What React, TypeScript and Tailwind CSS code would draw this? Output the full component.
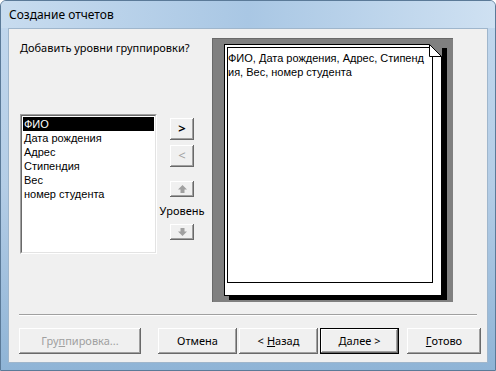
import React from 'react';

// 🔹 Мастер отчетов: шаг группировки (классический диалог Access)
const fields = ['ФИО', 'Дата рождения', 'Адрес', 'Стипендия', 'Вес', 'номер студента'];

const btn3d =
  'bg-[#f0f0f0] shadow-[inset_-1px_-1px_#696969,inset_1px_1px_#ffffff,inset_-2px_-2px_#a0a0a0] flex items-center justify-center';

function ArrowIcon({ down }: { down?: boolean }) {
  return (
    <svg width="9" height="8" viewBox="0 0 9 8" className={down ? 'rotate-180' : ''}>
      <path d="M4.5 0 L9 4.5 L6.5 4.5 L6.5 8 L2.5 8 L2.5 4.5 L0 4.5 Z" fill="#a0a0a0" />
    </svg>
  );
}

export default function App() {
  return (
    <div
      className="w-[496px] h-[371px] flex flex-col bg-gradient-to-b from-[#c2d8ee] via-[#b4cde6] to-[#8fb4d6] border border-[#5b7a98] rounded-t-[6px] overflow-hidden"
      style={{ fontFamily: '"Noto Sans", "Open Sans", sans-serif' }}
    >
      {/* заголовок окна */}
      <div className="h-[27px] flex items-center pl-[8px] text-[12px] text-black bg-gradient-to-r from-[#c8dcef] via-[#a9c7e4] to-[#cfe1f2]">
        Создание отчетов
      </div>

      {/* тело диалога */}
      <div className="flex-1 mx-[7px] mb-[7px] bg-[#f0f0f0] border border-[#9fb6cc] flex flex-col">
        <div className="flex pl-[11px] pt-[9px]">
          {/* левая часть */}
          <div className="w-[192px] flex flex-col">
            <div className="mt-[2px] text-[11px] leading-[16px] text-black">Добавить уровни группировки?</div>

            <div className="mt-[58px] flex">
              {/* список полей */}
              <div className="w-[137px] h-[140px] border border-t-[#a0a0a0] border-l-[#a0a0a0] border-b-white border-r-white">
                <div
                  className="w-full h-full bg-white border border-t-[#696969] border-l-[#696969] border-b-[#e3e3e3] border-r-[#e3e3e3] pt-px px-px text-[11px] leading-[14px] text-black"
                  style={{ fontFamily: '"Liberation Sans", Arial, sans-serif' }}
                >
                  {fields.map((f, i) => (
                    <div key={f} className={`pl-[1px] h-[14px] ${i === 0 ? 'bg-black text-white' : ''}`}>
                      {f}
                    </div>
                  ))}
                </div>
              </div>

              {/* кнопки перемещения */}
              <div className="w-[44px] ml-[3px] pt-[4px] flex flex-col items-center">
                <div className={`${btn3d} w-[24px] h-[22px] text-[13px] font-bold text-black`}>&gt;</div>
                <div className={`${btn3d} w-[24px] h-[22px] mt-[5px] text-[13px] text-[#a0a0a0]`}>&lt;</div>
                <div className={`${btn3d} w-[24px] h-[16px] mt-[14px]`}>
                  <ArrowIcon />
                </div>
                <div className="mt-[6px] text-[11px] leading-[16px] text-black">Уровень</div>
                <div className={`${btn3d} w-[24px] h-[16px] mt-[5px]`}>
                  <ArrowIcon down />
                </div>
              </div>
            </div>
          </div>

          {/* предпросмотр */}
          <div className="w-[241px] h-[264px] bg-[#808080] border-l border-t border-[#6a6a6a] pl-[11px] pt-[5px]">
            <div className="relative w-[218px] h-[252px] bg-white border border-black shadow-[5px_4px_0_#000] p-[2px] pb-[12px] pr-[8px]">
              <div
                className="w-full h-full border border-black pt-[3px] text-[11px] leading-[14px] text-black whitespace-nowrap"
                style={{ fontFamily: '"Liberation Sans", Arial, sans-serif' }}
              >
                <div>ФИО, Дата рождения, Адрес, Стипенд</div>
                <div>ия, Вес, номер студента</div>
              </div>
              {/* загнутый уголок */}
              <svg width="13" height="13" viewBox="0 0 13 13" className="absolute -top-px -right-px">
                <path d="M0 0 L13 0 L13 13 Z" fill="#808080" />
                <path d="M0.5 0.5 L12.5 12.5 L0.5 12.5 Z" fill="#ffffff" />
                <path d="M0.5 0.5 L12.5 12.5" stroke="#000" strokeWidth="1" />
                <path d="M0.5 0.5 L0.5 12.5 L12.5 12.5" stroke="#000" strokeWidth="1" fill="none" />
              </svg>
            </div>
          </div>
        </div>

        {/* разделитель */}
        <div className="mx-[10px] mt-[12px] h-[2px] border-t border-[#a0a0a0] border-b border-b-white" />

        {/* кнопки внизу */}
        <div className="flex mt-[12px] pl-[10px] text-[11px]">
          <div className={`${btn3d} w-[122px] h-[26px] text-[#a0a0a0]`}>
            Гру<span className="underline">п</span>пировка...
          </div>
          <div className={`${btn3d} w-[79px] h-[26px] ml-[17px] text-black`}>Отмена</div>
          <div className={`${btn3d} w-[79px] h-[26px] ml-[2px] text-black`}>
            &lt; <span className="underline ml-[3px]">Н</span>азад
          </div>
          <div className="w-[79px] h-[26px] ml-[2px] border border-black">
            <div className={`${btn3d} w-full h-full text-black`}>
              <span className="underline">Д</span>алее &gt;
            </div>
          </div>
          <div className={`${btn3d} w-[74px] h-[26px] ml-[8px] text-black`}>
            <span className="underline">Г</span>отово
          </div>
        </div>
      </div>
    </div>
  );
}
